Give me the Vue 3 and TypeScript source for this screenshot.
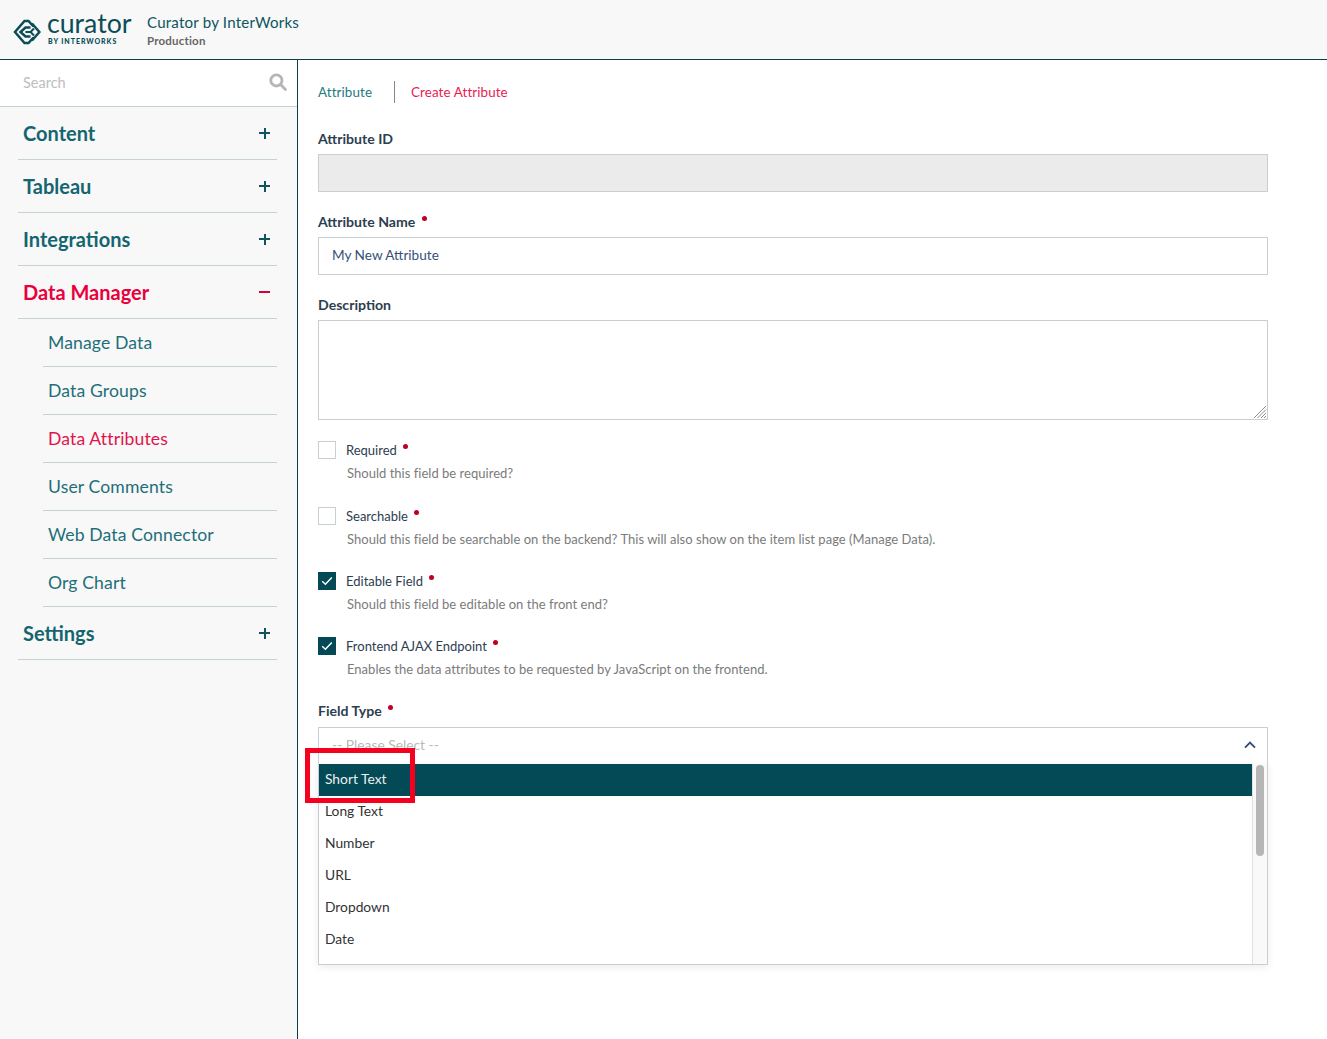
<script setup lang="ts">
const navTop = ['Content', 'Tableau', 'Integrations']
const subs = ['Manage Data', 'Data Groups', 'Data Attributes', 'User Comments', 'Web Data Connector', 'Org Chart']
const checks = [
  { label: 'Required', help: 'Should this field be required?', on: false, cls: 'c1' },
  { label: 'Searchable', help: 'Should this field be searchable on the backend? This will also show on the item list page (Manage Data).', on: false, cls: 'c2' },
  { label: 'Editable Field', help: 'Should this field be editable on the front end?', on: true, cls: 'c3' },
  { label: 'Frontend AJAX Endpoint', help: 'Enables the data attributes to be requested by JavaScript on the frontend.', on: true, cls: 'c4' },
]
const options = ['Short Text', 'Long Text', 'Number', 'URL', 'Dropdown', 'Date']
</script>

<template>
  <div class="app">
    <header class="top">
      <div class="logo">
        <svg class="mark" width="28" height="26" viewBox="0 0 28 26" fill="none" stroke="#0b4d57" stroke-width="2.5" stroke-linejoin="miter">
          <path d="M20.5 7.5 L15.5 2 H11.5 L2 13 L11.5 24 H15.5 L20.5 18.5" />
          <path d="M19 4.5 L26.4 13 L19 21.5" />
          <path d="M17.5 8.5 H12.5 L7.5 13 L12.5 17.5 H17.5" />
          <path d="M12.5 13 H17.5 L21 9.5 M17.5 13 L21 16.5" stroke-width="2" />
        </svg>
        <div class="wordmark">
          <span class="curator">curator</span>
          <span class="by">BY INTERWORKS</span>
        </div>
      </div>
      <div class="site">
        <div class="site-name">Curator by InterWorks</div>
        <div class="site-env">Production</div>
      </div>
    </header>
    <div class="body">
      <aside class="side">
        <div class="search">
          <span>Search</span>
          <svg width="18" height="18" viewBox="0 0 18 18" fill="none" stroke="#b5b5b5" stroke-width="2.8">
            <circle cx="7.4" cy="7.4" r="5.6" />
            <path d="M11.6 11.6 L16.4 16.4" stroke-linecap="round" />
          </svg>
        </div>
        <nav class="nav">
          <div v-for="n in navTop" :key="n" class="item">
            <span>{{ n }}</span><span class="pm plus"></span>
          </div>
          <div class="item active">
            <span>Data Manager</span><span class="pm"></span>
          </div>
          <div v-for="s in subs" :key="s" class="sub" :class="{ current: s === 'Data Attributes' }">{{ s }}</div>
          <div class="item">
            <span>Settings</span><span class="pm plus"></span>
          </div>
        </nav>
      </aside>
      <main class="main">
        <div class="tabs">
          <span class="tab">Attribute</span>
          <span class="sep"></span>
          <span class="tab cur">Create Attribute</span>
        </div>
        <label class="lbl l-id">Attribute ID</label>
        <div class="input disabled"></div>
        <label class="lbl l-next">Attribute Name <i class="dot"></i></label>
        <div class="input">My New Attribute</div>
        <label class="lbl l-next">Description</label>
        <div class="area">
          <svg class="grip" width="14" height="14" viewBox="0 0 14 14" stroke="#8f8f8f" stroke-width="1">
            <path d="M13 1 L1 13 M13 4.5 L4.5 13 M13 8 L8 13 M13 11 L11 13" />
          </svg>
        </div>
        <div v-for="c in checks" :key="c.label" class="check" :class="c.cls">
          <div class="check-row">
            <span class="box" :class="{ on: c.on }">
              <svg v-if="c.on" width="12" height="10" viewBox="0 0 12 10" fill="none" stroke="#fff" stroke-width="1.5">
                <path d="M1.2 5.2 L4.4 8.2 L10.8 1.4" />
              </svg>
            </span>
            <span class="check-label">{{ c.label }}</span><i class="dot"></i>
          </div>
          <div class="help">{{ c.help }}</div>
        </div>
        <label class="lbl l-type">Field Type <i class="dot"></i></label>
        <div class="select">
          <div class="select-head">
            <span>-- Please Select --</span>
            <svg width="12" height="8" viewBox="0 0 12 8" fill="none" stroke="#34507a" stroke-width="2">
              <path d="M1 6.6 L6 1.6 L11 6.6" />
            </svg>
          </div>
          <div class="menu">
            <div class="opts">
              <div v-for="(o, i) in options" :key="o" class="opt" :class="{ sel: i === 0 }">{{ o }}</div>
            </div>
            <div class="track"><div class="thumb"></div></div>
          </div>
          <div class="mark-box"></div>
        </div>
      </main>
    </div>
  </div>
</template>

<style>
html, body { margin: 0; background: #fff; }
</style>

<style scoped>
* { box-sizing: border-box; }
.app {
  width: 1327px;
  height: 1039px;
  display: flex;
  flex-direction: column;
  overflow: hidden;
  font-family: Lato, "Open Sans", sans-serif;
  background: #fff;
}
.top {
  height: 60px;
  flex: none;
  background: #f8f8f8;
  border-bottom: 1px solid #0b4049;
  display: flex;
  align-items: center;
  padding-left: 13px;
}
.logo { display: flex; align-items: center; gap: 6px; width: 134px; }
.mark { flex: none; margin-top: 4px; }
.wordmark { display: flex; flex-direction: column; }
.curator {
  font-size: 26.7px;
  line-height: 20px;
  color: #0b4d57;
}
.by {
  font-size: 7px;
  line-height: 9px;
  margin: 4px 0 0 1px;
  font-weight: 900;
  letter-spacing: 0.95px;
  color: #0b4d57;
  white-space: nowrap;
}
.site { padding-top: 2px; }
.site-name { font-size: 15.1px; line-height: 18px; color: #0e5560; letter-spacing: 0.2px; margin-bottom: 3px; }
.site-env { font-size: 11.5px; line-height: 14px; font-weight: 700; color: #666; letter-spacing: 0.2px; }
.body { flex: 1; display: flex; min-height: 0; }
.side {
  width: 298px;
  flex: none;
  background: #f8f8f8;
  border-right: 1px solid #0b4049;
}
.search {
  height: 47px;
  background: #fff;
  border-bottom: 1px solid #c5d3d7;
  display: flex;
  align-items: center;
  justify-content: space-between;
  padding: 0 10px 1px 23px;
  font-size: 14.5px;
  color: #bdbdbd;
}
.search svg { margin-bottom: 2px; }
.nav { display: flex; flex-direction: column; padding: 0 20px 0 18px; }
.item {
  height: 53px;
  padding: 0 7px 0 5px;
  display: flex;
  align-items: center;
  justify-content: space-between;
  border-bottom: 1px solid #c5d3d7;
  font-size: 20px;
  font-weight: 700;
  color: #136570;
}
.item.active { color: #e8003d; }
.pm {
  position: relative;
  width: 11px;
  height: 2px;
  background: #0e5560;
}
.active .pm { background: #d4003c; }
.plus::after {
  content: "";
  position: absolute;
  left: 4.5px;
  top: -4.5px;
  width: 2px;
  height: 11px;
  background: #0e5560;
}
.sub {
  height: 48px;
  margin-left: 25px;
  padding-left: 5px;
  display: flex;
  align-items: center;
  border-bottom: 1px solid #c5d3d7;
  font-size: 17.6px;
  color: #1d6f7a;
  letter-spacing: 0.12px;
}
.sub.current { color: #e0144c; }
.main { flex: 1; min-width: 0; padding: 21px 59px 0 20px; position: relative; }
.tabs { display: flex; align-items: center; height: 22px; font-size: 13.4px; letter-spacing: 0.1px; }
.tab { color: #1d7a80; }
.tab.cur { color: #ea1a52; }
.sep { width: 1px; height: 22px; background: #888; margin: 0 16px 0 22px; }
.lbl {
  display: block;
  height: 18px;
  line-height: 16px;
  font-size: 14.1px;
  font-weight: 700;
  color: #2c3e50;
}
.l-id { margin-top: 28px; margin-bottom: 5px; }
.l-next { margin-top: 22px; margin-bottom: 5px; }
.l-type { margin-top: 0; margin-bottom: 6px; }
.dot {
  display: inline-block;
  width: 5px;
  height: 5px;
  border-radius: 50%;
  background: #c00020;
  vertical-align: 6px;
  margin-left: 3px;
}
.input {
  height: 38px;
  border: 1px solid #c8cfd2;
  padding: 0 13px 2px;
  display: flex;
  align-items: center;
  font-size: 13.6px;
  color: #34507a;
  background: #fff;
}
.input.disabled { background: #ebebeb; }
.area {
  height: 100px;
  border: 1px solid #c8cfd2;
  position: relative;
}
.grip { position: absolute; right: 0; bottom: 0; }
.check { display: flex; flex-direction: column; }
.c1 { margin-top: 21px; height: 66px; }
.c2 { height: 65px; }
.c3 { height: 65px; }
.c4 { height: 66px; }
.check-row { display: flex; align-items: center; height: 18px; }
.box {
  width: 18px;
  height: 18px;
  border: 1px solid #c8cfd2;
  background: #fff;
  margin-right: 10px;
  display: flex;
  align-items: center;
  justify-content: center;
}
.box.on { background: #034a56; border-color: #034a56; }
.check-label { font-size: 13px; color: #2c3e50; }
.check-row .dot { margin-left: 6px; margin-top: -8px; vertical-align: baseline; }
.help { margin: 5px 0 0 29px; font-size: 13px; line-height: 18px; color: #7b7b7b; letter-spacing: 0.02px; }
.select { position: relative; height: 38px; border: 1px solid #c8cfd2; background: #fff; }
.select-head {
  height: 36px;
  display: flex;
  align-items: center;
  justify-content: space-between;
  padding: 0 11px 3px 13px;
  font-size: 13.8px;
  color: #b9b9b9;
}
.menu {
  position: absolute;
  left: -1px;
  right: -1px;
  top: 36px;
  height: 201px;
  display: flex;
  background: #fff;
  border: 1px solid #c8cfd2;
  border-top: 0;
  box-shadow: 0 2px 8px rgba(0, 0, 0, 0.08);
}
.opts { flex: 1; min-width: 0; }
.opt {
  height: 32px;
  display: flex;
  align-items: center;
  padding: 0 0 4px 6px;
  font-size: 13.8px;
  color: #333;
}
.opt.sel { background: #034a56; color: #e9f0f1; }
.track {
  width: 15px;
  flex: none;
  background: #f9f9f9;
  border-left: 1px solid #e2e2e2;
  padding: 1px 3px;
}
.thumb { height: 91px; background: #b6b6b6; border-radius: 4px; }
.mark-box {
  position: absolute;
  left: -14px;
  top: 20px;
  width: 110px;
  height: 55px;
  border: 5px solid #f5001e;
  pointer-events: none;
}
</style>
